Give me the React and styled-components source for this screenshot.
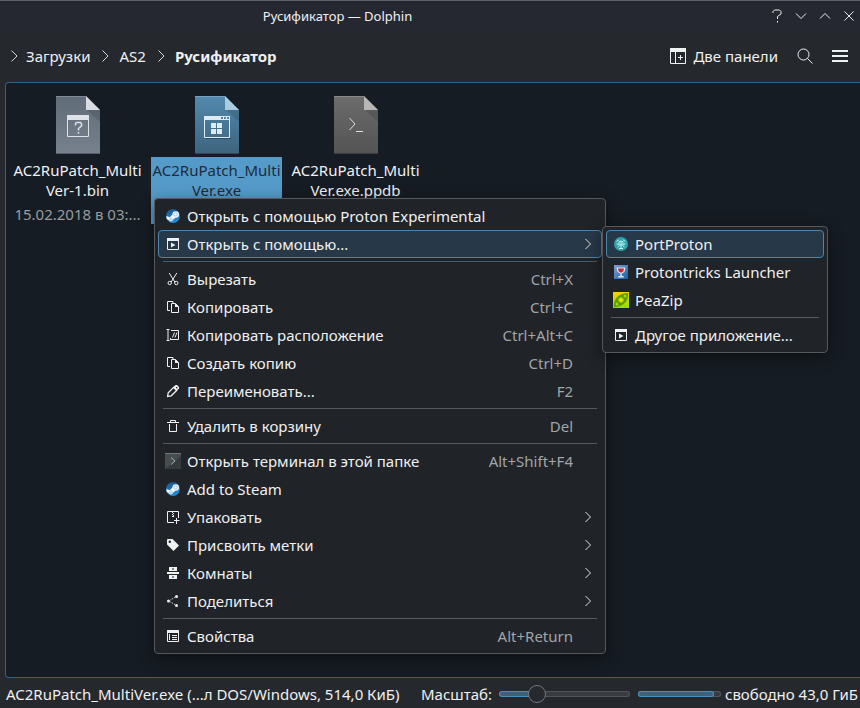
import React from 'react';
import styled, { createGlobalStyle } from 'styled-components';

const GlobalStyle = createGlobalStyle`
    * {
        box-sizing: border-box;
    }

    body {
        margin: 0;
        overflow: hidden;
        background: #25282c;
        color: #eff0f1;
        font-family: 'Noto Sans', sans-serif;
        font-size: 15px;
        line-height: 20px;
    }

    button {
        margin: 0;
        padding: 0;
        border: none;
        background: none;
        color: inherit;
        font: inherit;
    }

    svg {
        display: block;
        flex: none;
    }
`;

const Window = styled.div`
    display: flex;
    flex-direction: column;
    min-height: 100vh;
    border-top: 1px solid #5f6365;
`;

const TitleBar = styled.header`
    display: flex;
    align-items: center;
    height: 31px;
    padding: 0 3px 2px 0;
    background: #262831;
`;

const Title = styled.h1`
    flex: 1;
    margin: 0;
    padding-left: 86px;
    padding-right: 180px;
    font-size: 13px;
    font-weight: 400;
    text-align: center;
    white-space: nowrap;
`;

const WindowButtons = styled.div`
    display: flex;
    gap: 8px;
`;

const Toolbar = styled.nav`
    display: flex;
    align-items: center;
    justify-content: space-between;
    height: 50px;
    padding: 0 12px 2px 6px;
`;

const Breadcrumbs = styled.div`
    display: flex;
    align-items: center;
    gap: 4px;
`;

const Crumb = styled.a`
    display: flex;
    align-items: center;
    gap: 6px;
    padding-right: 3px;
    color: #eff0f1;
    font-weight: ${(props) => (props.$current ? 700 : 400)};
    text-decoration: none;

    &:first-child {
        gap: 4px;
    }
`;

const Actions = styled.div`
    display: flex;
    align-items: center;
    gap: 19px;
`;

const ActionButton = styled.button`
    display: flex;
    align-items: center;
    gap: 7px;
`;

const View = styled.main`
    flex: 1;
    margin-left: 5px;
    padding: 13px 6px;
    border: 1px solid #2c6488;
    border-right: none;
    border-radius: 4px 0 0 4px;
    background: #161c23;
`;

const FileGrid = styled.ul`
    display: flex;
    flex-wrap: wrap;
    gap: 8px;
    margin: 0;
    padding: 0;
    list-style: none;
`;

const FileItem = styled.li`
    display: flex;
    flex-direction: column;
    align-items: center;
    gap: 3px;
    width: 131px;
`;

const FileLabel = styled.div`
    width: 100%;
    height: 67px;
    padding-top: 3px;
    background: ${(props) => (props.$selected ? '#559bca' : 'transparent')};
    color: ${(props) => (props.$selected ? '#1e2c3a' : '#eff0f1')};
    text-align: center;
    white-space: nowrap;
`;

const FileDate = styled.div`
    margin-top: 4px;
    color: #989c9f;
`;

const MenuBox = styled.div`
    position: absolute;
    left: ${(props) => props.$x}px;
    top: ${(props) => props.$y}px;
    width: ${(props) => props.$width}px;
    padding: 3px;
    border: 1px solid #55585c;
    border-radius: 4px;
    background: #202327;
    box-shadow: 0 4px 16px rgba(0, 0, 0, 0.45);
`;

const MenuItem = styled.button`
    display: flex;
    align-items: center;
    gap: 6px;
    width: 100%;
    height: 28px;
    padding: 0 7px 0 6px;
    border: 1px solid ${(props) => (props.$active ? '#4886ae' : 'transparent')};
    border-radius: 4px;
    background: ${(props) => (props.$active ? '#273848' : 'transparent')};
    text-align: left;
    white-space: nowrap;
`;

const MenuText = styled.span`
    flex: 1;
`;

const Shortcut = styled.span`
    padding-right: 21px;
    color: #a1a5a8;
`;

const MenuSeparator = styled.hr`
    height: 1px;
    margin: 3px 5px;
    border: none;
    background: #55585c;
`;

const StatusBar = styled.footer`
    display: flex;
    align-items: center;
    height: 30px;
    padding: 2px 2px 0 6px;
    white-space: nowrap;
`;

const StatusText = styled.span`
    flex: 1;
`;

const ZoomLabel = styled.label`
    padding-right: 7px;
`;

const ZoomSlider = styled.input`
    width: 131px;
    height: 18px;
    margin: 0 8px 0 0;
    appearance: none;
    background: transparent;

    &::-webkit-slider-runnable-track {
        height: 6px;
        border: 1px solid transparent;
        border-radius: 3px;
        background:
            linear-gradient(90deg, #3c617c 28%, #383b3f 28%) padding-box,
            linear-gradient(90deg, #4a90bf 28%, #515559 28%) border-box;
    }

    &::-webkit-slider-thumb {
        width: 18px;
        height: 18px;
        margin-top: -7px;
        appearance: none;
        border: 1px solid #74777a;
        border-radius: 50%;
        background: #26292d;
    }
`;

const SpaceBar = styled.progress`
    width: 83px;
    height: 6px;
    margin-right: 4px;
    appearance: none;
    border: none;

    &::-webkit-progress-bar {
        border-radius: 3px;
        background: #383b3f;
        box-shadow: inset 0 0 0 1px #515559;
    }

    &::-webkit-progress-value {
        border-radius: 3px;
        background: #3c617c;
        box-shadow: inset 0 0 0 1px #4a90bf;
    }
`;

const Svg = ({ size = 16, children }) => (
    <svg width={size} height={size} viewBox={`0 0 ${size} ${size}`} fill="none" stroke="#eff0f1" aria-hidden="true">
        {children}
    </svg>
);

const Chevron = () => (
    <Svg>
        <path d="M5.500 2.500 11 8 5.500 13.500" stroke="#d5d7d9" />
    </Svg>
);

const MenuChevron = () => (
    <svg width="12" height="12" viewBox="0 0 12 12" fill="none" stroke="#e3e5e6" aria-hidden="true">
        <path d="M3.500 1 8.500 6 3.500 11" />
    </svg>
);

const SteamIcon = () => (
    <svg width="16" height="16" viewBox="0 0 16 16" aria-hidden="true">
        <defs>
            <linearGradient id="steam" x1="0" y1="0" x2="0" y2="1">
                <stop offset="0" stopColor="#17568c" />
                <stop offset="1" stopColor="#2590dc" />
            </linearGradient>
        </defs>
        <circle cx="8" cy="8" r="7" fill="url(#steam)" />
        <path d="M1.200 8 4.800 9.300 7.400 6.600a3.300 3.300 0 1 1 3.200 3.200L8.200 11.600a2.400 2.400 0 0 1-4.500.5L1.800 11Z" fill="#f4f7fa" />
        <circle cx="10.600" cy="6.400" r="1.700" fill="none" stroke="#85b3d6" strokeWidth=".7" />
        <circle cx="5.900" cy="11.100" r="1.200" fill="none" stroke="#6daedd" strokeWidth=".6" />
    </svg>
);

const OpenWithIcon = () => (
    <Svg>
        <path d="M2.500 2.500h11v11h-11z" />
        <path d="M2 2h12v3H2z" fill="#eff0f1" stroke="none" />
        <path d="M6 6.500v5L10.500 9z" fill="#eff0f1" stroke="none" />
    </Svg>
);

const CutIcon = () => (
    <Svg>
        <path d="M4.200 2 9.800 11M11.800 2 6.200 11" />
        <circle cx="4.700" cy="12" r="1.700" />
        <circle cx="11.300" cy="12" r="1.700" />
    </Svg>
);

const CopyIcon = () => (
    <Svg>
        <path d="M5 11.500H2.500v-9h5.500v2" />
        <path d="M6.500 4.500h4l3 3v6h-7z" />
        <path d="M10 4v4h4z" fill="#eff0f1" stroke="none" />
    </Svg>
);

const CopyPathIcon = () => (
    <Svg>
        <path d="M1.500 2.500h3M1.500 13.500h3M3 2.500v11M6 3.500h7.500v9H6M5.500 11v2" />
        <path d="m7.500 10.500 2-5M10 10.500l2-5" />
    </Svg>
);

const RenameIcon = () => (
    <Svg>
        <path d="m2.600 13.400.6-3.600 5.400-5.400 3 3-5.400 5.400z" strokeWidth="1.300" />
        <path d="m8 4.500 2.500-2.500H12l2 2v1.500L11.500 8z" fill="#eff0f1" stroke="none" />
        <path d="M11 4.500h1v1" stroke="#202327" />
    </Svg>
);

const TrashIcon = () => (
    <Svg>
        <path d="M2 4.500h12M5.500 4.500v-2h5v2M4.500 6v7.500h7V6" />
    </Svg>
);

const TerminalIcon = () => (
    <svg width="16" height="16" viewBox="0 0 16 16" fill="none" aria-hidden="true">
        <path d="M0 0h16v16H0z" fill="#454d4f" />
        <path d="M0 16 16 3v13z" fill="#353b3d" />
        <path d="M0 .5h16" stroke="#6d7779" />
        <path d="m6 4.500 4 3.500-4 3.500" stroke="#a9b0b2" />
    </svg>
);

const PackIcon = () => (
    <Svg>
        <path d="M9 13.500H2.500v-11h11V9M11.500 9v6M9 11.500h5.500" />
        <path d="M7 3h1v1H7zM8 4h1v1H8zM7 5h1v1H7zM8 6h1v1H8zM7 7h2v1H7z" fill="#eff0f1" stroke="none" />
    </Svg>
);

const TagIcon = () => (
    <Svg>
        <path
            d="M2 3a1 1 0 0 1 1-1h4.500L14 8.500 8.500 14 2 7.500ZM4.800 3.600a1.200 1.200 0 1 0 0 2.400 1.200 1.200 0 0 0 0-2.400Z"
            fill="#eff0f1"
            fillRule="evenodd"
            stroke="none"
        />
    </Svg>
);

const RoomsIcon = () => (
    <Svg>
        <path
            d="M4 2h8v4H4zM2 7h12v2H2zM4 10h8v4H4zM7 3.500v1h2v-1zM7 11.500v1h2v-1z"
            fill="#eff0f1"
            fillRule="evenodd"
            stroke="none"
        />
    </Svg>
);

const ShareIcon = () => (
    <Svg>
        <g fill="#eff0f1" stroke="none">
            <circle cx="3.500" cy="8" r="1.500" />
            <circle cx="11.500" cy="3.500" r="1.500" />
            <circle cx="11.500" cy="12.500" r="1.500" />
        </g>
        <path d="m5.500 7 5-3M5.500 9l5 3" strokeDasharray="1 1" />
    </Svg>
);

const PropertiesIcon = () => (
    <Svg>
        <path d="M2.500 2.500h11v11h-11z" />
        <path d="M2 2h12v3H2z" fill="#eff0f1" stroke="none" />
        <path d="M4.500 6v6M7 7.500h5M7 9.500h5M7 11.500h5" />
    </Svg>
);

const PortProtonIcon = () => (
    <svg width="16" height="16" viewBox="0 0 16 16" fill="none" aria-hidden="true">
        <circle cx="8" cy="8" r="7" fill="#2ba4ae" />
        <path
            d="M3.500 5.500 6 3.800M10 3.800 12.500 5.500M3.500 7.800l2.500.7M12.500 7.800l-2.500.7M4.500 11l2-1.500M11.500 11l-2-1.500M8 9v3.500M6 12.500h4"
            stroke="#c4f0ee"
        />
        <path d="M5.500 5.500 8 4.500l2.500 1V8L8 10 5.500 8z" fill="#a9e3e2" />
        <path d="M6.500 6.500h1v1h-1zM8.500 6.500h1v1h-1z" fill="#1c8791" />
    </svg>
);

const ProtontricksIcon = () => (
    <svg width="16" height="16" viewBox="0 0 16 16" fill="none" aria-hidden="true">
        <defs>
            <linearGradient id="tricks" x1="0" y1="0" x2="1" y2="1">
                <stop offset="0" stopColor="#7f9fce" />
                <stop offset="1" stopColor="#1562a4" />
            </linearGradient>
        </defs>
        <path d="M1 1h14v14H1z" fill="url(#tricks)" />
        <path d="M3.500 3.500h9L11.500 8 8.700 9.500V12h2v1.500H5.300V12h2V9.500L4.500 8z" fill="#dfe6f0" />
        <path d="M5 4.500h6l-.7 3L8 8.800 5.700 7.500z" fill="#c4273c" />
    </svg>
);

const PeaZipIcon = () => (
    <svg width="16" height="16" viewBox="0 0 16 16" fill="none" aria-hidden="true">
        <defs>
            <linearGradient id="pea" x1="0" y1="0" x2="0" y2="1">
                <stop offset="0" stopColor="#ffcf00" />
                <stop offset="1" stopColor="#8ee000" />
            </linearGradient>
        </defs>
        <path d="M0 0h16v16H0z" fill="url(#pea)" />
        <path d="M1 15C0 8 5 1 15 1c1 8-5 14-14 14Z" fill="#5c9a00" />
        <circle cx="8" cy="8" r="2.300" fill="#e6e600" stroke="#a5d800" />
        <circle cx="4" cy="12" r="1.500" fill="#a5d800" />
        <circle cx="12" cy="4" r="1.500" fill="#a5d800" />
    </svg>
);

const FILE_COLORS = {
    bin: { top: '#616c79', bottom: '#76818d', fold: '#d9dce0' },
    exe: { top: '#5289ad', bottom: '#3d647e', fold: '#a9cce0' },
    ppdb: { top: '#6c6c6c', bottom: '#535353', fold: '#b7b7b7' },
};

const FileIcon = ({ kind }) => {
    const colors = FILE_COLORS[kind];

    return (
        <svg width="44" height="58" viewBox="0 0 44 58" fill="none" aria-hidden="true">
            <defs>
                <linearGradient id={`page-${kind}`} x1="0" y1="0" x2="0" y2="1">
                    <stop offset="0" stopColor={colors.top} />
                    <stop offset="1" stopColor={colors.bottom} />
                </linearGradient>
            </defs>
            <path d="M0 0h30l14 14v44H0z" fill={`url(#page-${kind})`} />
            <path d="M0 .5h30" stroke="#fff" strokeOpacity=".2" />
            <path d="M0 57.500h44" stroke="#000" strokeOpacity=".25" />
            <path d="m31 14 13 12V14z" fill="#000" opacity=".12" />
            <path d="m30 0 14 14H30z" fill={colors.fold} />
            {kind === 'bin' && (
                <>
                    <path d="M11.500 19.500h21v21h-21z" stroke="#dee1e5" />
                    <path d="M11 19h22v5H11z" fill="#dee1e5" />
                    <path d="M19.500 29.500v-2l1-1h4l1 1v2.500l-3 2.500v2" stroke="#dee1e5" strokeWidth="1.500" />
                    <path d="M21.700 36h1.600v1.600h-1.600z" fill="#dee1e5" />
                </>
            )}
            {kind === 'exe' && (
                <>
                    <path d="M10 42.500h26" stroke="#2c4f66" />
                    <path d="M9.500 20.500h25v21h-25z" stroke="#dfebf2" />
                    <path d="M9 20h26v4H9z" fill="#dfebf2" />
                    <path d="M26 21h2v2h-2zM29 21h2v2h-2zM32 21h2v2h-2z" fill="#4e86aa" />
                    <path d="M16 27h5v5h-5zM22 27h5v5h-5zM16 33h5v5h-5zM22 33h5v5h-5z" fill="#dfebf2" />
                </>
            )}
            {kind === 'ppdb' && <path d="m15.500 22 5.500 6-5.500 6M22 35.500h7" stroke="#dedede" />}
        </svg>
    );
};

const files = [
    { kind: 'bin', name: ['AC2RuPatch_Multi', 'Ver-1.bin'], date: '15.02.2018 в 03:...' },
    { kind: 'exe', name: ['AC2RuPatch_Multi', 'Ver.exe'], selected: true },
    { kind: 'ppdb', name: ['AC2RuPatch_Multi', 'Ver.exe.ppdb'] },
];

const contextMenu = [
    { icon: SteamIcon, text: 'Открыть с помощью Proton Experimental' },
    { icon: OpenWithIcon, text: 'Открыть с помощью...', submenu: true, active: true },
    null,
    { icon: CutIcon, text: 'Вырезать', shortcut: 'Ctrl+X' },
    { icon: CopyIcon, text: 'Копировать', shortcut: 'Ctrl+C' },
    { icon: CopyPathIcon, text: 'Копировать расположение', shortcut: 'Ctrl+Alt+C' },
    { icon: CopyIcon, text: 'Создать копию', shortcut: 'Ctrl+D' },
    { icon: RenameIcon, text: 'Переименовать...', shortcut: 'F2' },
    null,
    { icon: TrashIcon, text: 'Удалить в корзину', shortcut: 'Del' },
    null,
    { icon: TerminalIcon, text: 'Открыть терминал в этой папке', shortcut: 'Alt+Shift+F4' },
    { icon: SteamIcon, text: 'Add to Steam' },
    { icon: PackIcon, text: 'Упаковать', submenu: true },
    { icon: TagIcon, text: 'Присвоить метки', submenu: true },
    { icon: RoomsIcon, text: 'Комнаты', submenu: true },
    { icon: ShareIcon, text: 'Поделиться', submenu: true },
    null,
    { icon: PropertiesIcon, text: 'Свойства', shortcut: 'Alt+Return' },
];

const openWithMenu = [
    { icon: PortProtonIcon, text: 'PortProton', active: true },
    { icon: ProtontricksIcon, text: 'Protontricks Launcher' },
    { icon: PeaZipIcon, text: 'PeaZip' },
    null,
    { icon: OpenWithIcon, text: 'Другое приложение...' },
];

const Menu = ({ items, x, y, width }) => (
    <MenuBox role="menu" $x={x} $y={y} $width={width}>
        {items.map((item, index) =>
            item ? (
                <MenuItem key={index} type="button" role="menuitem" $active={item.active}>
                    <item.icon />
                    <MenuText>{item.text}</MenuText>
                    {item.shortcut && <Shortcut>{item.shortcut}</Shortcut>}
                    {item.submenu && <MenuChevron />}
                </MenuItem>
            ) : (
                <MenuSeparator key={index} />
            )
        )}
    </MenuBox>
);

const App = () => {
    return (
        <Window>
            <GlobalStyle />
            <TitleBar>
                <Title>Русификатор — Dolphin</Title>
                <WindowButtons>
                    <button type="button" aria-label="Справка">
                        <Svg>
                            <path d="M4 5V3.500L5.500 2h5L12 3.500V6L8.500 8.500V11" />
                            <path d="M8 13h1v1.500H8z" fill="#eff0f1" stroke="none" />
                        </Svg>
                    </button>
                    <button type="button" aria-label="Свернуть">
                        <Svg>
                            <path d="m3 5.500 5 5 5-5" />
                        </Svg>
                    </button>
                    <button type="button" aria-label="Развернуть">
                        <Svg>
                            <path d="m3 10.500 5-5 5 5" />
                        </Svg>
                    </button>
                    <button type="button" aria-label="Закрыть">
                        <Svg>
                            <path d="m3.500 3.500 9 9M12.500 3.500l-9 9" />
                        </Svg>
                    </button>
                </WindowButtons>
            </TitleBar>
            <Toolbar>
                <Breadcrumbs>
                    <Crumb href="#downloads">
                        <Chevron />
                        <span>Загрузки</span>
                    </Crumb>
                    <Crumb href="#as2">
                        <Chevron />
                        <span>AS2</span>
                    </Crumb>
                    <Crumb href="#current" $current>
                        <Chevron />
                        <span>Русификатор</span>
                    </Crumb>
                </Breadcrumbs>
                <Actions>
                    <ActionButton type="button">
                        <Svg>
                            <path d="M.5.5h15v15H.5zM5.500 3v12M8 9.500h5M10.500 7v5" />
                            <path d="M0 0h16v4H0z" fill="#eff0f1" stroke="none" />
                        </Svg>
                        Две панели
                    </ActionButton>
                    <ActionButton type="button" aria-label="Поиск">
                        <Svg>
                            <circle cx="6.500" cy="6.500" r="5.500" />
                            <path d="m10.500 10.500 5 5" />
                        </Svg>
                    </ActionButton>
                    <ActionButton type="button" aria-label="Меню">
                        <Svg>
                            <path d="M0 3h16M0 8h16M0 13h16" strokeWidth="2" />
                        </Svg>
                    </ActionButton>
                </Actions>
            </Toolbar>
            <View>
                <FileGrid>
                    {files.map((file) => (
                        <FileItem key={file.kind}>
                            <FileIcon kind={file.kind} />
                            <FileLabel $selected={file.selected}>
                                {file.name[0]}
                                <br />
                                {file.name[1]}
                                {file.date && <FileDate>{file.date}</FileDate>}
                            </FileLabel>
                        </FileItem>
                    ))}
                </FileGrid>
            </View>
            <StatusBar>
                <StatusText>AC2RuPatch_MultiVer.exe (...л DOS/Windows, 514,0 КиБ)</StatusText>
                <ZoomLabel htmlFor="zoom">Масштаб:</ZoomLabel>
                <ZoomSlider id="zoom" type="range" min="0" max="100" defaultValue="25" />
                <SpaceBar id="space" aria-label="Занято на диске" max="100" value="91" />
                <label htmlFor="space">свободно 43,0 ГиБ</label>
            </StatusBar>
            <Menu items={contextMenu} x={154} y={198} width={452} />
            <Menu items={openWithMenu} x={602} y={226} width={226} />
        </Window>
    );
};

export default App;
